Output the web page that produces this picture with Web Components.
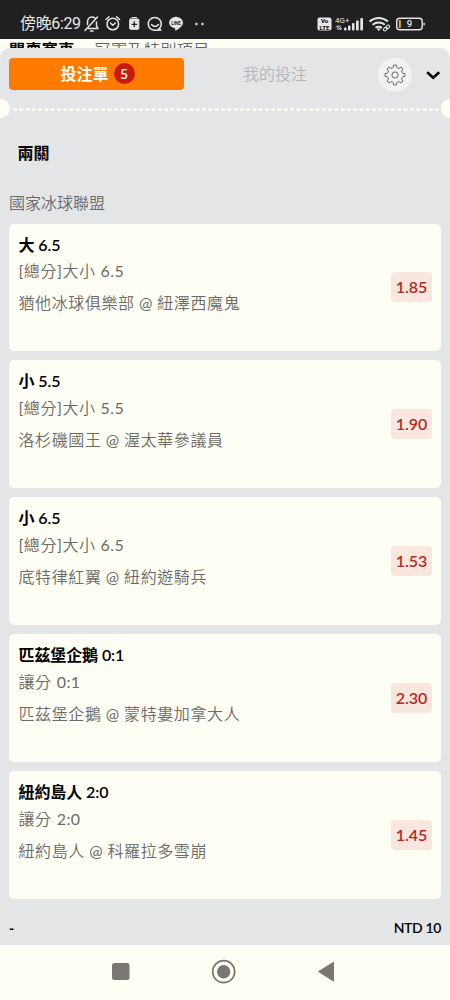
<!DOCTYPE html>
<html lang="zh-Hant">
<head>
<meta charset="utf-8">
<title>投注單</title>
<style>
html,body{margin:0;padding:0}
body{width:450px;height:1000px;overflow:hidden;background:#fffef5;font-family:Lato,"Noto Sans CJK TC",sans-serif;color:#000}
</style>
</head>
<body>
<bet-app></bet-app>
<script>
const define = (name, html) => {
  const t = document.createElement('template');
  t.innerHTML = html;
  customElements.define(name, class extends HTMLElement {
    constructor() {
      super();
      this.attachShadow({mode: 'open'}).appendChild(t.content.cloneNode(true));
    }
  });
};

define('status-bar', `
<style>
:host{display:flex;height:39px;box-sizing:border-box;background:#202020;color:#e6e6e6;padding:10px 24px 0 20px;justify-content:space-between;font-family:Roboto,"Noto Sans CJK TC",sans-serif}
.time{font-size:16px;line-height:28px;width:62px;white-space:nowrap;font-weight:400;letter-spacing:-.35px}
.left{display:flex}
svg{display:block}
text{font-family:Roboto,sans-serif}
</style>
<div class="left"><span class="time">傍晚6:29</span>
<svg width="126" height="28" viewBox="82 10 126 28" fill="none" stroke="#e6e6e6" stroke-width="1.5" stroke-linecap="round" stroke-linejoin="round">
<path d="M97.500 17 85 30.500M87.500 24.500v-2.500c0-3 2-5 4.500-5 1 0 2 .4 2.800 1M96.500 22v4l1.500 2.500H88.500M90.500 31h2.500"/>
<circle cx="112.800" cy="24" r="5.800"/><path d="M106 19.500l3-2.700M119.600 19.500l-3-2.700M110.500 23l2.300 2.200 2.500-2.200"/>
<path d="M130.500 19h7.500q.8 0 .8.800v8.700q0 .8-.8.800h-7.500q-.8 0-.8-.8v-8.700q0-.8.800-.8zM132 17.500h4.500" fill="#e6e6e6" stroke-width="1"/><path d="M134.300 22v4.600M132 24.300h4.600" stroke="#202020" stroke-width="1.300"/>
<path d="M151 29.200a6.500 6.500 0 1 1 7.500 0l2.500.9-4.500.2q-3 .3-5.500-1.100M151.500 24.500q3.500 4 7 0"/>
<path d="M176 17.300c-3.800 0-6.500 2.300-6.500 5.300 0 3.300 3 5 6 5.400l.1 2.300c3.700-1.700 7-4.600 7-7.700 0-3-2.800-5.300-6.600-5.300z" fill="#e6e6e6" stroke-width=".8"/>
<text x="176" y="24.700" text-anchor="middle" font-size="4.500" font-weight="700" fill="#202020" stroke="none">LINE</text>
<g fill="#e6e6e6" stroke="none"><circle cx="196.500" cy="24" r="1.200"/><circle cx="202.500" cy="24" r="1.200"/></g>
</svg></div>
<svg width="110" height="28" viewBox="316 10 110 28">
<rect x="317.500" y="17.500" width="14" height="13" rx="2" fill="#e6e6e6"/>
<g font-weight="900" font-size="6" fill="#202020" text-anchor="middle"><text x="324.500" y="23.300">Vo</text><text x="324.500" y="29.500">LTE</text></g>
<text x="335" y="22.700" font-size="8" fill="#e6e6e6">4G+</text>
<path d="M338 30v-4.500l-2 2M340 25.500v4.500l2-2" stroke="#e6e6e6" fill="none"/>
<g fill="#e6e6e6"><rect x="344" y="27.500" width="2.500" height="3" rx="1"/><rect x="348" y="25.500" width="2.500" height="5" rx="1"/><rect x="352" y="23" width="2.500" height="7.500" rx="1"/><rect x="356" y="20.500" width="2.700" height="10" rx="1"/><rect x="360.300" y="18" width="2.700" height="12.500" rx="1"/></g>
<g fill="none" stroke="#e6e6e6" stroke-width="2"><path d="M369.500 21.500q9.200-7 18.500 0M372.500 24.800q6.200-4.500 12.500 0M375.500 27.800q3.200-2.200 6.500 0"/></g>
<path d="M376.500 28.500h4.500l-2.200 2.500z" fill="#e6e6e6"/>
<g fill="none" stroke="#202020" stroke-width="3"><ellipse cx="386.500" cy="28" rx="3.500" ry="2" transform="rotate(-40 386.500 28)"/></g>
<g fill="none" stroke="#e6e6e6" stroke-width="1"><ellipse cx="385.300" cy="29" rx="2.200" ry="1.500" transform="rotate(-40 385.300 29)"/><ellipse cx="387.700" cy="27" rx="2.200" ry="1.500" transform="rotate(-40 387.700 27)"/></g>
<rect x="396.700" y="18.200" width="25.500" height="11.600" rx="3" fill="none" stroke="#e6e6e6" stroke-width="1.400"/>
<rect x="398.800" y="20" width="2" height="8" rx=".5" fill="#f0a51e"/><path d="M423.500 22.500q1.500 0 1.500 1.500t-1.500 1.500z" fill="#e6e6e6"/>
<text x="409.500" y="27.300" text-anchor="middle" font-size="9.500" font-weight="500" fill="#e6e6e6">9</text>
</svg>`);

define('page-peek', `
<style>
:host{display:flex;height:19px;margin-bottom:-10px;overflow:hidden;background:#fffef5;padding-left:9px;gap:20px;font-size:16px;line-height:24px;box-sizing:border-box;white-space:nowrap}
b{margin-top:-1px;letter-spacing:.4px}span{margin-top:-1px;color:#666;font-weight:350;letter-spacing:.45px}
</style><b>開賣賽事</b><span>冠軍及特別項目</span>`);

define('sheet-tabs', `
<style>
:host{display:flex;height:52px;box-sizing:border-box;padding:9.500px 9px 0;align-items:flex-start}
.tab{width:175px;height:32.500px;border-radius:4px;display:flex;align-items:center;justify-content:center;font-size:16px;line-height:24px}
.on{background:#ff7a00;color:#fffef5;font-weight:700;gap:5px;padding-left:2px;box-sizing:border-box}
.off{color:#b5b6b8;font-weight:350;width:182px}
.n{width:21px;height:21px;border-radius:50%;background:#c91a0c;font-size:14px;font-weight:600;line-height:21px;text-align:center}
.gear{width:34px;height:34px;margin:0 0 0 12px;flex:none}
.chev{width:16px;height:34px;margin-left:12.500px}
</style>
<div class="tab on"><span>投注單</span><span class="n">5</span></div>
<div class="tab off">我的投注</div>
<svg class="gear" viewBox="-17 -17 34 34"><circle r="17" fill="#f1f2f4"/><path id="g" fill="none" stroke="#55585b" stroke-width=".9" stroke-linejoin="round"/><circle r="3.100" fill="none" stroke="#55585b" stroke-width=".9"/></svg>
<svg class="chev" viewBox="0 0 16 34"><path d="M2.200 14.300l6 5.500 6-5.500" fill="none" stroke="#000" stroke-width="2.600"/></svg>`);

define('ticket-line', `
<style>
:host{display:flex;height:19px;margin-top:-1px;align-items:center}
i{width:9.500px;height:19px;background:#fffef5;flex:none}
.l{border-radius:0 10px 10px 0}.r{border-radius:10px 0 0 10px}
svg{flex:1;height:19px;display:block}
</style><i class="l"></i><svg viewBox="0 0 431 19"><path d="M3 10.500H431" stroke="#fffef5" stroke-width="2.400" stroke-dasharray="3.900 2.400"/></svg><i class="r"></i>`);

define('bet-card', `
<style>
:host{display:flex;height:127.500px;box-sizing:border-box;background:#fffef5;border-radius:5px;padding:8px 9px 0 9.500px;justify-content:space-between}
.pick{font-size:16px;font-weight:600;line-height:25px;letter-spacing:-.1px;white-space:nowrap}
.sub{font-size:16px;line-height:28px;color:#6b6b67;font-weight:350;letter-spacing:.6px}
.market{margin-top:.5px}
.teams{margin-top:4px;white-space:nowrap}
.odds{margin-top:40.500px;width:41px;height:30px;border-radius:4px;background:#f8e6df;color:#b52a20;font-weight:600;font-size:16px;line-height:30px;text-align:center}
</style>
<div><div class="pick"><slot name="pick"></slot></div><div class="sub market"><slot name="market"></slot></div><div class="sub teams"><slot name="teams"></slot></div></div>
<div class="odds"><slot name="odds"></slot></div>`);

define('bet-sheet', `
<style>
:host{display:block;position:relative;height:897px;background:#e4e5e7;border-radius:10px 10px 0 0;overflow:hidden}
h2{margin:23px 0 0 17.500px;font-size:16px;line-height:24px;font-weight:700;height:24px}
.league{margin:26px 0 0 9px;height:24px;font-size:16px;line-height:24px;color:#68696b;font-weight:350}
.cards{display:grid;gap:9.400px;margin:8.500px 9px 0}
footer{display:flex;justify-content:space-between;padding:0 9px;margin-top:17px;font-size:14px;font-weight:600;line-height:24px;letter-spacing:-.35px}
footer b{font-weight:900}
</style>
<sheet-tabs></sheet-tabs><ticket-line></ticket-line>
<h2>兩關</h2><div class="league">國家冰球聯盟</div>
<div class="cards"><slot></slot></div>
<footer><b>-</b><span>NTD 10</span></footer>`);

define('nav-bar', `
<style>:host{display:block;height:55px;background:#fffef5}svg{display:block}</style>
<svg width="450" height="55" viewBox="0 945 450 55" fill="#7a7772"><rect x="112" y="963" width="17.500" height="17" rx="2.500"/><circle cx="223.700" cy="971.700" r="11" fill="none" stroke="#7a7772" stroke-width="1.700"/><circle cx="223.700" cy="971.700" r="6.700"/><path d="M318.500 971.600L333.500 962.300V981z" stroke="#7a7772" stroke-linejoin="round"/></svg>`);

customElements.define('bet-app', class extends HTMLElement {
  constructor() {
    super();
    const bets = [
      ['大 6.5', '[總分]大小 6.5', '猶他冰球俱樂部 @ 紐澤西魔鬼', '1.85'],
      ['小 5.5', '[總分]大小 5.5', '洛杉磯國王 @ 渥太華參議員', '1.90'],
      ['小 6.5', '[總分]大小 6.5', '底特律紅翼 @ 紐約遊騎兵', '1.53'],
      ['匹茲堡企鵝 0:1', '讓分 0:1', '匹茲堡企鵝 @ 蒙特婁加拿大人', '2.30'],
      ['紐約島人 2:0', '讓分 2:0', '紐約島人 @ 科羅拉多雪崩', '1.45']
    ];
    // Latin runs use the regular weight beside the lighter CJK text.
    const latin = s => s.replace(/[\[\]@\d.:]+/g, m => `<span class="l">${m}</span>`);
    this.attachShadow({mode: 'open'}).innerHTML = `<style>:host{display:block;width:450px;height:1000px}.l{font-weight:400;letter-spacing:.45px}[slot=teams]{word-spacing:-.6px}</style>
      <status-bar></status-bar><page-peek></page-peek>
      <bet-sheet>${bets.map(b => `<bet-card><span slot="pick">${b[0]}</span><span slot="market">${latin(b[1])}</span><span slot="teams">${latin(b[2])}</span><span slot="odds">${b[3]}</span></bet-card>`).join('')}</bet-sheet>
      <nav-bar></nav-bar>`;
    const tabs = this.shadowRoot.querySelector('bet-sheet').shadowRoot.querySelector('sheet-tabs');
    const p = (r, a) => `${(r * Math.cos(a * Math.PI / 180)).toFixed(2)} ${(r * Math.sin(a * Math.PI / 180)).toFixed(2)}`;
    let d = '';
    for (let i = 0; i < 8; i++) {
      const a = i * 45;
      d += `${i ? 'L' : 'M'}${p(10, a - 8)}L${p(10, a + 8)}L${p(8, a + 13)}Q${p(6.6, a + 22.5)} ${p(8, a + 32)}`;
    }
    tabs.shadowRoot.getElementById('g').setAttribute('d', d + 'Z');
  }
});
</script>
</body>
</html>
